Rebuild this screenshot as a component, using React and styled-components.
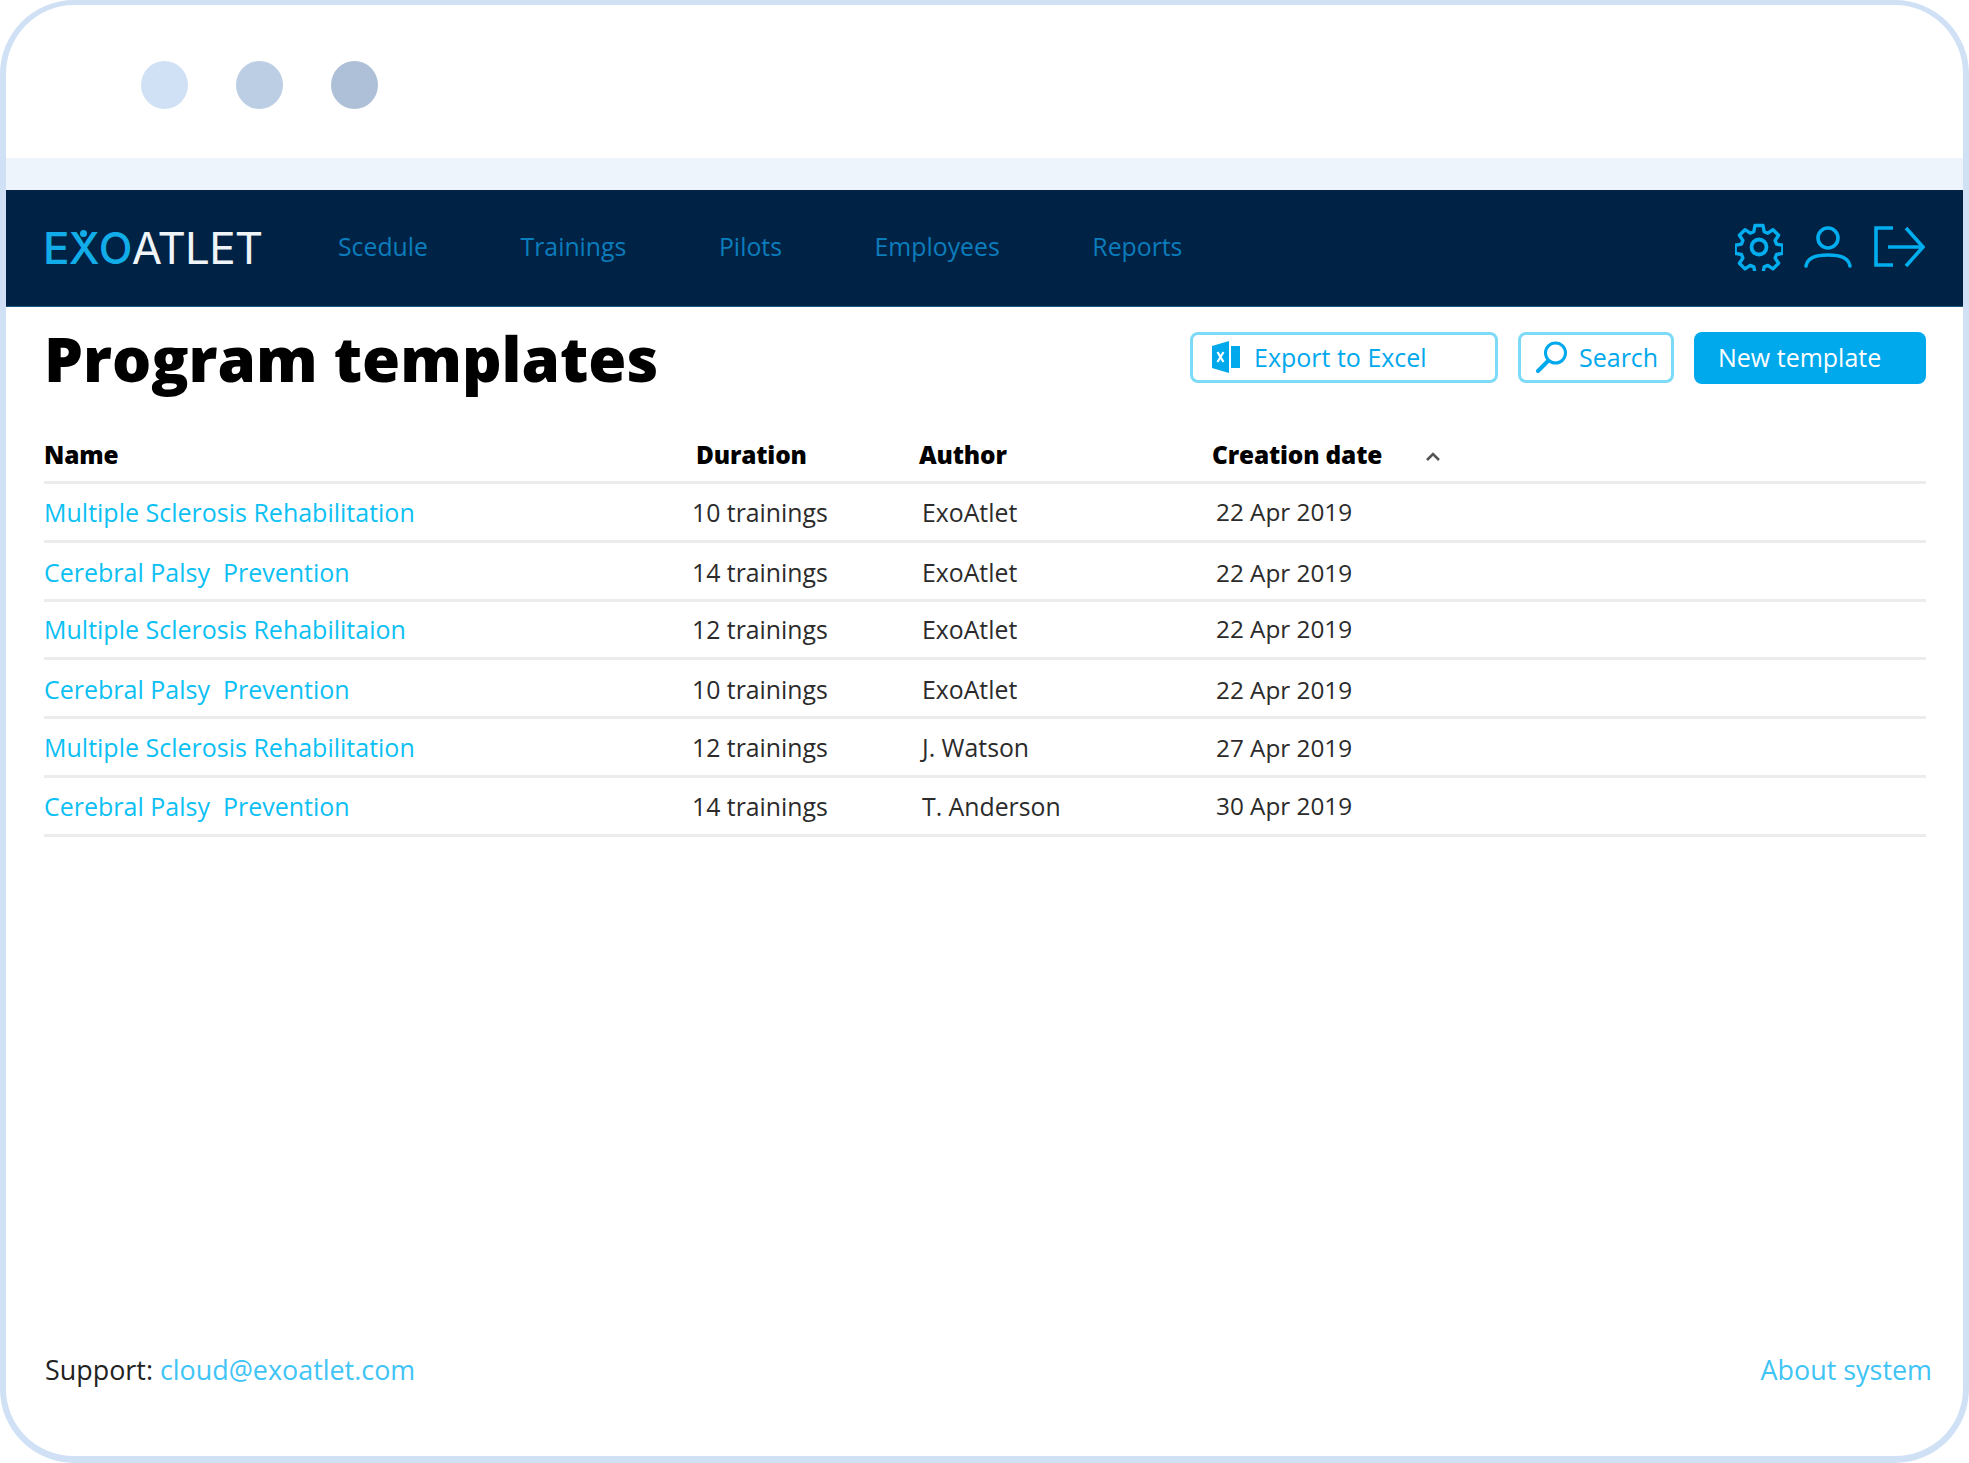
import React from "react";
import styled, { createGlobalStyle } from "styled-components";

const GlobalStyle = createGlobalStyle`
  html, body {
    margin: 0;
    padding: 0;
    background: #ffffff;
  }
  * {
    box-sizing: border-box;
  }
  body {
    font-family: "Open Sans", "Liberation Sans", sans-serif;
  }
`;

const Frame = styled.div`
  width: 1969px;
  height: 1463px;
  display: flex;
  flex-direction: column;
  background: #ffffff;
  border: solid #d0e1f6;
  border-width: 5px 6px 7px 6px;
  border-radius: 74px;
  overflow: hidden;
`;

const TitleBar = styled.div`
  height: 153px;
  flex: none;
  display: flex;
  align-items: flex-start;
  gap: 48px;
  padding: 56px 0 0 135px;
`;

const Dot = styled.span`
  width: 47px;
  height: 48px;
  border-radius: 50%;
  background: ${(p) => p.$color};
`;

const Band = styled.div`
  height: 32px;
  flex: none;
  background: #edf4fc;
`;

const Nav = styled.nav`
  height: 117px;
  flex: none;
  display: flex;
  align-items: center;
  padding: 0 38px;
  background: #002345;
  border-bottom: 1px solid #1d5a80;
`;

const Logo = styled.div`
  width: 217px;
  margin-left: -1px;
  font-family: "Inter", "Liberation Sans", sans-serif;
  font-size: 44px;
  line-height: 1;
  letter-spacing: -0.8px;
  white-space: nowrap;
  display: flex;
`;

const LogoBlue = styled.span`
  color: #12ace8;
  font-weight: 500;
`;

const LogoX = styled(LogoBlue)`
  position: relative;
  &::after {
    content: "";
    position: absolute;
    left: 50%;
    top: 4px;
    width: 7px;
    height: 7px;
    margin-left: -4px;
    border-radius: 50%;
    background: #12ace8;
  }
`;

const LogoWhite = styled.span`
  color: #eef4f8;
  font-weight: 400;
`;

const NavLinks = styled.div`
  display: flex;
  gap: 92.6px;
  margin-left: 78px;
  padding-bottom: 4px;
  flex: 1;
`;

const NavLink = styled.a`
  font-size: 24.8px;
  color: #0b7cbc;
`;

const NavIcons = styled.div`
  display: flex;
  align-items: center;
  gap: 21px;
  padding-bottom: 3px;
  color: #00aeef;
`;

const Main = styled.main`
  flex: 1;
  display: flex;
  flex-direction: column;
  padding: 25px 37px 0 38px;
`;

const Heading = styled.div`
  display: flex;
  align-items: center;
  justify-content: space-between;
  height: 52px;
`;

const Title = styled.h1`
  margin: 0;
  font-size: 61.7px;
  font-weight: 800;
  line-height: 52px;
  color: #000000;
`;

const Actions = styled.div`
  display: flex;
  gap: 20px;
`;

const OutlineButton = styled.button`
  width: ${(p) => p.$width}px;
  height: 51px;
  display: flex;
  align-items: center;
  gap: ${(p) => p.$gap}px;
  padding: 0 0 2px ${(p) => p.$pad}px;
  border: 3px solid #7edbf8;
  border-radius: 8px;
  background: #ffffff;
  color: #00a8ec;
  font-family: inherit;
  font-size: 25px;
`;

const PrimaryButton = styled.button`
  width: 232px;
  height: 52px;
  padding: 0 0 2px 24px;
  border: 0;
  border-radius: 8px;
  background: #00a8ec;
  color: #ffffff;
  font-family: inherit;
  font-size: 25px;
  text-align: left;
`;

const Table = styled.div`
  margin-top: 40px;
  display: flex;
  flex-direction: column;
`;

const Row = styled.div`
  display: grid;
  grid-template-columns: 648px 226px 294px 1fr;
  align-items: center;
  height: ${(p) => (p.$head ? 60 : 58.83)}px;
  padding-top: ${(p) => p.$down || 0}px;
  padding-bottom: ${(p) => p.$up || 0}px;
  border-bottom: 3px solid #ececec;
`;

const HeadCell = styled.div`
  display: flex;
  align-items: center;
  padding-left: ${(p) => p.$pad || 0}px;
  font-size: 24.4px;
  font-weight: 800;
  letter-spacing: -0.15px;
  color: #000000;
`;

const Sort = styled.svg`
  margin: 3px 0 0 43px;
  color: #555555;
`;

const NameCell = styled.a`
  font-size: 25px;
  color: #0cc0f4;
  white-space: pre;
`;

const Cell = styled.div`
  padding-left: ${(p) => p.$pad || 0}px;
  font-size: ${(p) => p.$size || 24.8}px;
  color: #2b2b2b;
`;

const Footer = styled.footer`
  margin-top: auto;
  display: flex;
  justify-content: space-between;
  padding: 0 31px 68px 39px;
  font-size: 26.9px;
  color: #222222;
`;

const FooterLink = styled.a`
  color: #3fc4f5;
`;

const rows = [
  { name: "Multiple Sclerosis Rehabilitation", duration: "10 trainings", author: "ExoAtlet", date: "22 Apr 2019" },
  { name: "Cerebral Palsy  Prevention", duration: "14 trainings", author: "ExoAtlet", date: "22 Apr 2019", down: 3 },
  { name: "Multiple Sclerosis Rehabilitaion", duration: "12 trainings", author: "ExoAtlet", date: "22 Apr 2019", up: 2 },
  { name: "Cerebral Palsy  Prevention", duration: "10 trainings", author: "ExoAtlet", date: "22 Apr 2019", down: 2 },
  { name: "Multiple Sclerosis Rehabilitation", duration: "12 trainings", author: "J. Watson", date: "27 Apr 2019" },
  { name: "Cerebral Palsy  Prevention", duration: "14 trainings", author: "T. Anderson", date: "30 Apr 2019", up: 1 },
];

function GearIcon() {
  return (
    <svg width="48" height="48" viewBox="0 0 48 48" fill="none" stroke="currentColor" strokeWidth="3.4" strokeLinejoin="round">
      <path d="M20 2.5h8l1.2 6.2 3.6 1.5 5.2-3.5 5.6 5.6-3.5 5.2 1.5 3.6 6.2 1.2v8l-6.2 1.2-1.5 3.6 3.5 5.2-5.6 5.6-5.2-3.5-3.6 1.5-1.2 6.2h-8l-1.2-6.2-3.6-1.5-5.2 3.5-5.6-5.6 3.5-5.2-1.5-3.6-6.2-1.2v-8l6.2-1.2 1.5-3.6-3.5-5.2 5.6-5.6 5.2 3.5 3.6-1.5z" />
      <circle cx="24" cy="24" r="7.5" strokeWidth="3.8" />
    </svg>
  );
}

function UserIcon() {
  return (
    <svg width="48" height="42" viewBox="0 0 48 42" fill="none" stroke="currentColor" strokeWidth="3.6" strokeLinecap="round">
      <circle cx="24" cy="12" r="10" />
      <path d="M2 40c1-7 9-11 22-11s21 4 22 11" />
    </svg>
  );
}

function ExitIcon() {
  return (
    <svg width="52" height="42" viewBox="0 0 52 42" fill="none" stroke="currentColor" strokeWidth="3.6">
      <path d="M20 2H3v37h17" />
      <path d="M15 21h34" />
      <path d="M33 2l17 19-17 19" />
    </svg>
  );
}

function ExcelIcon() {
  return (
    <svg width="28" height="32" viewBox="0 0 28 32">
      <path d="M0 5L17 0v32L0 27z" fill="#00a8ec" />
      <path d="M19 5h9v22h-9z" fill="#00a8ec" />
      <path d="M5.5 11l6 10M11.5 11l-6 10" stroke="#ffffff" strokeWidth="2.2" />
    </svg>
  );
}

function SearchIcon() {
  return (
    <svg width="32" height="32" viewBox="0 0 32 32" fill="none" stroke="#00a8ec">
      <circle cx="19.5" cy="12" r="10" strokeWidth="3" />
      <path d="M12 20L2 30" strokeWidth="4" strokeLinecap="round" />
    </svg>
  );
}

export default function App() {
  return (
    <>
      <GlobalStyle />
      <Frame>
        <TitleBar>
          <Dot $color="#d0e1f6" />
          <Dot $color="#bbcee4" />
          <Dot $color="#aec0d7" />
        </TitleBar>
        <Band />
        <Nav>
          <Logo>
            <LogoBlue>E</LogoBlue>
            <LogoX>X</LogoX>
            <LogoBlue>O</LogoBlue>
            <LogoWhite>ATLET</LogoWhite>
          </Logo>
          <NavLinks>
            <NavLink>Scedule</NavLink>
            <NavLink>Trainings</NavLink>
            <NavLink>Pilots</NavLink>
            <NavLink>Employees</NavLink>
            <NavLink>Reports</NavLink>
          </NavLinks>
          <NavIcons>
            <GearIcon />
            <UserIcon />
            <ExitIcon />
          </NavIcons>
        </Nav>
        <Main>
          <Heading>
            <Title>Program templates</Title>
            <Actions>
              <OutlineButton $width={308} $pad={19} $gap={14}>
                <ExcelIcon />
                Export to Excel
              </OutlineButton>
              <OutlineButton $width={156} $pad={15} $gap={11}>
                <SearchIcon />
                Search
              </OutlineButton>
              <PrimaryButton>New template</PrimaryButton>
            </Actions>
          </Heading>
          <Table>
            <Row $head $down={4}>
              <HeadCell>Name</HeadCell>
              <HeadCell $pad={4}>Duration</HeadCell>
              <HeadCell $pad={1}>Author</HeadCell>
              <HeadCell>
                Creation date
                <Sort width="16" height="11" viewBox="0 0 16 11" fill="none" stroke="currentColor" strokeWidth="2.6">
                  <path d="M2 9l6-6 6 6" />
                </Sort>
              </HeadCell>
            </Row>
            {rows.map((row, i) => (
              <Row key={i} $down={row.down} $up={row.up}>
                <NameCell>{row.name}</NameCell>
                <Cell>{row.duration}</Cell>
                <Cell $pad={4}>{row.author}</Cell>
                <Cell $pad={4} $size={24.3}>{row.date}</Cell>
              </Row>
            ))}
          </Table>
        </Main>
        <Footer>
          <div>
            Support: <FooterLink>cloud@exoatlet.com</FooterLink>
          </div>
          <FooterLink>About system</FooterLink>
        </Footer>
      </Frame>
    </>
  );
}
